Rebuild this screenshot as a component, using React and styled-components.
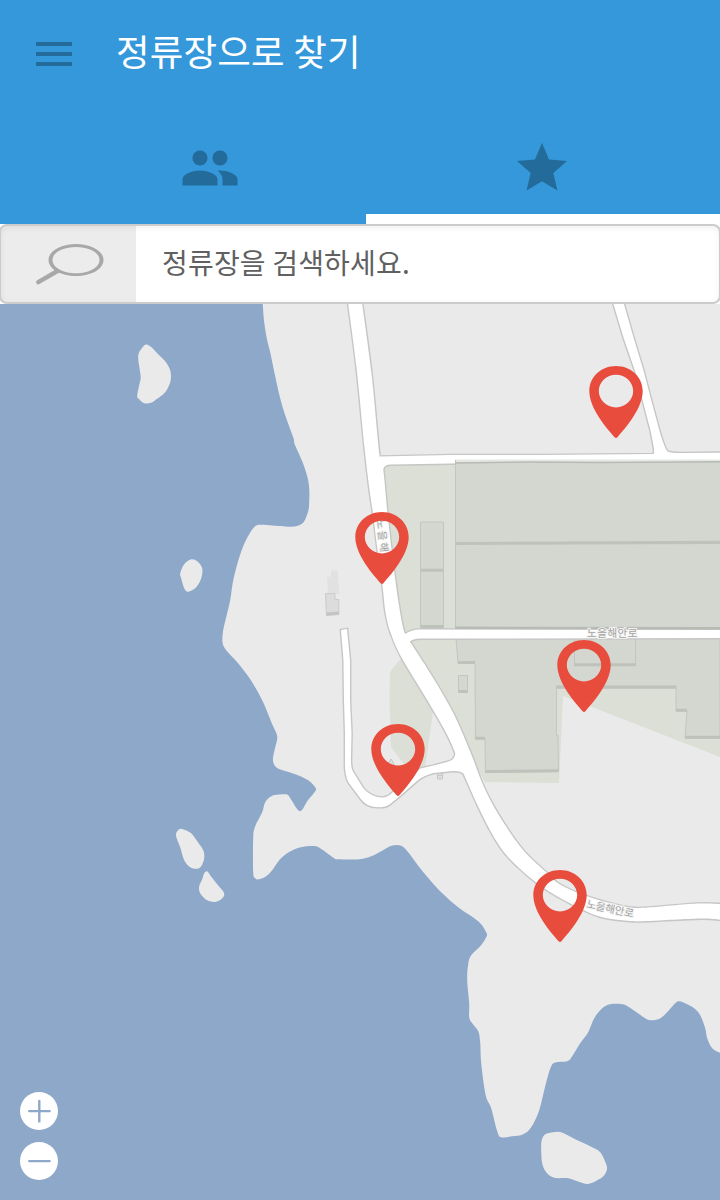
import React from "react";
import styled, { createGlobalStyle } from "styled-components";
import { MdMenu, MdPeople, MdStar } from "react-icons/md";

const Global = createGlobalStyle`
  *, *::before, *::after { box-sizing: border-box; }
  body { margin: 0; background: #fff; font-family: "Noto Sans CJK KR", "Noto Sans", sans-serif; }
  button { border: 0; padding: 0; background: none; font: inherit; }
`;

const Screen = styled.div`
  display: flex;
  flex-direction: column;
  width: 720px;
  height: 1200px;
  overflow: hidden;
`;

const Header = styled.header`
  display: flex;
  flex-direction: column;
  height: 224px;
  background: #3498db;
  color: #236b9a;
`;

const TitleBar = styled.div`
  display: flex;
  align-items: center;
  height: 108px;
  padding-left: 30px;
`;

const IconButton = styled.button`
  display: flex;
  color: inherit;
`;

const Title = styled.h1`
  margin: 0 0 6px 38px;
  color: #fff;
  font-size: 36.5px;
  font-weight: 400;
  letter-spacing: 0.2px;
  line-height: 52px;
  white-space: nowrap;
`;

const Tabs = styled.nav`
  display: grid;
  grid-template-columns: 366px 354px;
  flex: 1;
`;

const Tab = styled.button`
  display: flex;
  align-items: center;
  justify-content: center;
  padding: ${(p) => (p.$active ? "14px 2px 0 0" : "4px 0 0 54px")};
  color: inherit;
  border-bottom: ${(p) => (p.$active ? "10px solid #fff" : "0")};
`;

const SearchBar = styled.label`
  display: flex;
  height: 80px;
  margin: 0 -1px;
  border: 2px solid #ccc;
  border-radius: 8px;
  background: #fff;
  overflow: hidden;
  box-shadow: inset 0 2px 6px rgba(0, 0, 0, 0.06);
`;

const SearchIconCell = styled.span`
  display: flex;
  width: 135px;
  padding: 16px 0 0 34px;
  background: rgba(0, 0, 0, 0.073);
`;

const SearchText = styled.span`
  padding: 16px 0 0 26px;
  color: #606060;
  font-size: 28px;
  letter-spacing: 0.18px;
  line-height: 40px;
  white-space: nowrap;
`;

const MapArea = styled.main`
  position: relative;
  height: 896px;
  background: #8ea8ca;
`;

const MapCanvas = styled.svg`
  display: block;
  width: 720px;
  height: 896px;
`;

const RoadLabel = styled.text`
  font-family: "Noto Sans CJK KR", sans-serif;
  font-size: 10.5px;
  fill: #a3a3a3;
  stroke: #f4f4f3;
  stroke-width: 2px;
  paint-order: stroke;
`;

const ZoomControls = styled.div`
  position: absolute;
  left: 20px;
  bottom: 20px;
  display: flex;
  flex-direction: column;
  gap: 12px;
`;

const ZoomButton = styled.button`
  display: flex;
  width: 38px;
  height: 38px;
  border-radius: 50%;
  background: #fff;
`;

/* Closed or open curve through a flat list of points. */
function curve(str, closed) {
  const p = str.trim().split(/\s+/).map((s) => s.split(",").map(Number));
  const n = p.length;
  const at = (i) => (closed ? p[(i + n) % n] : p[Math.max(0, Math.min(n - 1, i))]);
  let d = "";
  for (let i = 0; i < (closed ? n : n - 1); i++) {
    const [a, b, c, e] = [at(i - 1), at(i), at(i + 1), at(i + 2)];
    d += `C${b[0] + (c[0] - a[0]) / 6},${b[1] + (c[1] - a[1]) / 6} ${c[0] - (e[0] - b[0]) / 6},${c[1] - (e[1] - b[1]) / 6} ${c[0]},${c[1]}`;
  }
  return `M${p[0]}${d}${closed ? "Z" : ""}`;
}

const COAST = curve(`262.5,303 264,322 267,340 270,352 275,376 280,398 285,415 293,437 294.5,444 302,461 307,476 309,488
309,502 308,511 304,521 299,525 292,526.5 283,526 262,524.5 255,526 249,534 243,546 237,564 232.5,583 230,600 226,617
223,630 222.3,642 226,650 237,662 250,679 262,700 272,724 277,736 275,747 272.7,759 275,766 281,769.5 295,774 308,780
315,787 315,791 307,801 302,809.5 298,810 292,801 288,795 284,794 272,795.5 265,802 262,812 255,826 253,838 253,872
255,878 259,879 266,876 272,870 279,860 287,853 297,848 307,846 316,846 323,850 334,858 338,859 359,859 371,856 381,851
392,845.3 401,845.5 408,852 420,868 430,880 441,892 458,907 478,921 486,932 486,937 480,946 471,955 468,964 467,980
469,1003 469,1017 472,1023 478,1031 480,1042 481,1063 485.5,1095 491,1108 497,1131 501,1137 512,1136 523,1134 531,1127
539,1110 546,1082 551,1066 556,1062 567,1061 572,1056 580,1043 588,1032 594,1018 602,1008 610,1004 622,1004 629,1007
645,1018 651,1020 658,1019 665,1014 675,1003 679,1001 685,1003 694,1008 700,1015 705,1028 707,1038 712,1048 721,1053`) + "V303Z";

const ISLANDS = [
  "139,352 145,344.5 150,346 157,353 165,361 170,370 170.5,380 167,389 163,394 157,398.5 151,402.5 144,403 139,399 137,396 139,385 140.5,377 139,366 138,358",
  "191,559 197,561 202,568 201,578 196,587 188,591.5 184,588 181,578 180,573 184,564",
  "176,833 179,829 183,829 191,833 197,841 203,850 204,858 201,866 197,868.5 190,867 184,860 180,847 176.5,838",
  "207,871 210,875 217,884 223.5,892 223,897 216,901.5 207,900 200,893 199,886 202,879 204,873",
  "541.5,1140 545,1134 553,1132 561,1132 575,1139 590,1146 600,1152 606,1164 606.5,1170 602,1177 589,1183.5 580,1182 568,1178 554,1177.5 546,1172 542,1163 541,1150",
].map((s) => curve(s, true));

const join = (a, b) => a + b.replace("M", "L") + "Z";

const ROADS = [
  join(
    curve("347.5,302 356,367 364,447 368.7,487 372.5,513 377.5,553 382,585 385,612 390,632 401,657 427,700 448,737 463,773 483,817 500,847 517,866 537,883 557,896 583,909.5 603,917 630,920.5 647,920.5 700,918 722,919.5"),
    curve("722,903.5 697,903 647,907 630,907 607,902 580,893.5 558,883 547,873 523,850 503,822 485,790 470,752 453,713 433,678 412,645 404,632 398,602 392,557 387,513 382.5,467 379,455 371,373 361.5,302")
  ),
  "M379 456L450 454.5L540 454.5L653.5 453.5L653.5 448L650 430L643 403L635 372L623 337L612.5 302H623L633 337L643 370L650 397L657 423Q663 446 667 451Q671 452.5 680 452.5L722 452V461.5L600 462L525 461.5L450 463L390 464Q384 464 382.5 469L376 469Z",
  "M404 634Q411 629 419 629L722 629.5V637.5L420 638Q412 638 408 642L402 640Z",
  "M340.5 629.5L343 660L343.5 700L344.5 733V760Q344 774 348 782L360 798Q366 807 378 806.5Q385 807 389 804L400 795L417 780Q423 775 433 772.5L452 770.5Q460 770 463 773L468 768L455 748Q456 759 448 761L433 765L420 768L392 792Q387 797 382 797Q371 797 363 788L353 772Q350 768 350.5 755L351 733L349.5 700V660L346.5 628.5Z",
];

const Building = ({ d }) => <path d={d} fill="#d4d7d0" stroke="#c3c6bf" strokeWidth="1" />;

const PIN =
  "M-1.6 -1C-8 -8.5 -26.7 -29 -26.7 -47C-26.7 -61 -15 -72 0 -72S26.7 -61 26.7 -47C26.7 -29 8 -8.5 1.6 -1Q0 .8 -1.6 -1ZM0 -63.2C-9.5 -63.2 -17.2 -55.8 -17.2 -46.9S-9.5 -30.6 0 -30.6S17.2 -38 17.2 -46.9S9.5 -63.2 0 -63.2Z";

const STOPS = [[616, 438], [382, 584], [584, 712], [398, 796], [560, 942]];

function StopMap() {
  return (
    <MapCanvas viewBox="0 304 720 896">
      <g fill="#eaeaea" transform="translate(0.2 0.3)">
        <path d={COAST} />
        {ISLANDS.map((d) => <path key={d} d={d} />)}
      </g>
      <g fill="#dbdfd6">
        <path d="M382 463H720V757L592 707L563 696L559 783L485 782L400 630Z" />
        <path d="M403 656L390 672L389.5 700L391 747L404 764L425 768L433 712Z" />
      </g>
      <path d="M331 570.500H337.500L339.500 594L328 593.500L327 576.500H331Z" fill="#e1e1e1" />
      <path d="M325.500 593.500H335V599.500H338.800V614.500L326.500 615.500Z" fill="#dcdcdc" stroke="#cbcbcb" />
      <path d="M326.500 614L338.800 613" stroke="#c4c4c4" strokeWidth="3" />
      <path d="M437.500 770V779H442.500V770M437.500 775.500H442.500" fill="#ddd" stroke="#c8c8c8" />
      <path d="M386 767L391 759L394 764V770" fill="#ddd" stroke="#c4c4c4" />

      <Building d="M420.500 522H443.500V628.500H420.500Z" />
      <Building d="M456 638L458 663.500H475L475.500 739H485L485.500 772.500L558.500 771.500L558 735.500H556.500V686H676V711H687L685 738H720V638Z" />
      <Building d="M458.500 675.500H467.500V692.500H458.500Z" />
      <Building d="M574.500 638V665.500H635.500V638" />
      <g stroke="#bfc2bb" strokeWidth="3" fill="none">
        <path d="M421 570.300H443M421 626.500H443M458 662.500H475M475.500 738.200H485M485 771.500L558.500 770.800M556.500 687.200H676M676 710.300H687M685 737.200H720M458.500 691.500H467.500M574.500 664.800H636" />
      </g>

      <g transform="translate(0.5 0.6)">
        {ROADS.map((d) => <path key={d} d={d} fill="none" stroke="#c6c6c4" strokeWidth="2.8" />)}
        {ROADS.map((d) => <path key={d} d={d} fill="#fff" />)}
      </g>

      <path d="M455 462H720V629H455Z" fill="#d4d7d0" />
      <path d="M455 459.500H720V462H455Z" fill="#d4d7d0" fillOpacity="0.6" />
      <path d="M455.500 460V629" stroke="#c3c6bf" />
      <path d="M455 463L530 462L600 462.500L720 461.800" fill="none" stroke="#b8bab5" strokeWidth="1.600" />
      <path d="M455.500 543.500L720 542.300" stroke="#bfc2bb" strokeWidth="3.200" />
      <path d="M455 627.800L720 628.300" stroke="#b8bbb4" strokeWidth="2.400" />

      <RoadLabel x="587" y="636.500" textLength="50.500">노을해안로</RoadLabel>
      <RoadLabel transform="translate(586 907.500) rotate(12)" textLength="48">노을해안로</RoadLabel>
      <RoadLabel transform="translate(376.500 519.500) rotate(83)" textLength="57">노을해안로</RoadLabel>

      {STOPS.map(([x, y]) => (
        <path key={x} transform={`translate(${x} ${y})`} d={PIN} fill="#e84c3d" fillRule="evenodd" />
      ))}
    </MapCanvas>
  );
}

function ZoomGlyph({ plus }) {
  return (
    <svg width="38" height="38" viewBox="0 0 38 38" stroke="#8ea8ca" strokeWidth="2.4" strokeLinecap="round">
      <path d="M9.2 19.1H29.6" />
      {plus && <path d="M19.3 9V29.4" />}
    </svg>
  );
}

export default function App() {
  return (
    <Screen>
      <Global />
      <Header>
        <TitleBar>
          <IconButton aria-label="메뉴"><MdMenu size={48} /></IconButton>
          <Title>정류장으로 찾기</Title>
        </TitleBar>
        <Tabs>
          <Tab aria-label="사람"><MdPeople size={60} /></Tab>
          <Tab $active aria-label="즐겨찾기"><MdStar size={60} /></Tab>
        </Tabs>
      </Header>
      <SearchBar>
        <SearchIconCell>
          <svg width="72" height="44" viewBox="35 242 72 44" fill="none" stroke="#a8a8a8">
            <path fillRule="evenodd" fill="#a8a8a8" stroke="none" d="M76 244C91.300 244 103.500 251 103.500 260S91.300 276 76 276S48.500 269 48.500 260S60.700 244 76 244ZM76 247C63 247 52.500 252.500 52.500 260S63 273.300 76 273.300S99.500 267.500 99.500 260S89 247 76 247Z" />
            <path d="M57.500 271L38.300 282.200" strokeWidth="4.400" strokeLinecap="round" />
          </svg>
        </SearchIconCell>
        <SearchText>정류장을 검색하세요.</SearchText>
      </SearchBar>
      <MapArea>
        <StopMap />
        <ZoomControls>
          <ZoomButton aria-label="확대"><ZoomGlyph plus /></ZoomButton>
          <ZoomButton aria-label="축소"><ZoomGlyph /></ZoomButton>
        </ZoomControls>
      </MapArea>
    </Screen>
  );
}
